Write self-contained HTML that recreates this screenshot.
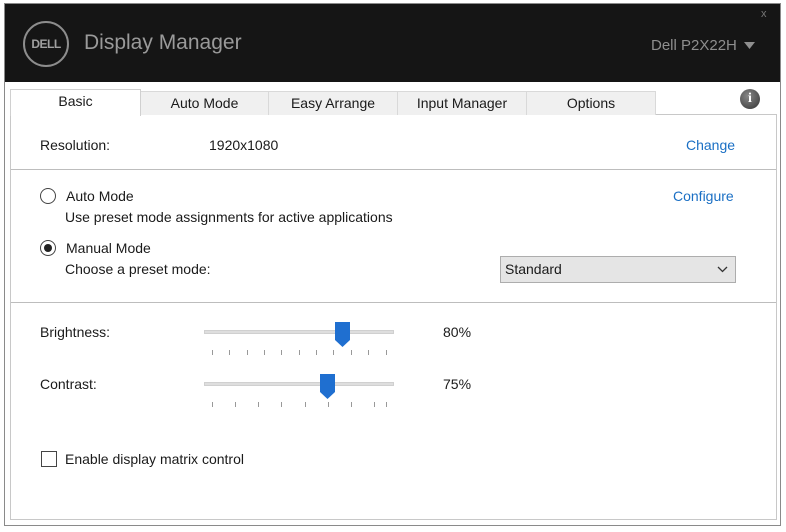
<!DOCTYPE html>
<html><head><style>
*{margin:0;padding:0;box-sizing:border-box}
body{width:786px;height:532px;background:#fff;font-family:"Liberation Sans",sans-serif;font-size:14px;color:#1a1a1a;position:relative;overflow:hidden}
.a{position:absolute;white-space:nowrap}
.tab{position:absolute;top:91px;height:24px;background:#f0f0f0;border:1px solid #d9d9d9;border-bottom:none;text-align:center;line-height:23px;font-size:14px}
.tick{position:absolute;width:1px;height:5px;background:#999}
.hl{position:absolute;left:11px;width:765px;height:1px;background:#bdbdbd}
.blue{color:#1a6fc4}
</style></head><body>
<div class="a" style="left:4px;top:3px;width:777px;height:523px;border:1px solid #8a8a8a"></div>
<div class="a" style="left:5px;top:4px;width:775px;height:78px;background:#151515"></div>
<div class="a" style="left:23px;top:21px;width:46px;height:46px;border:2px solid #8d8d8d;border-radius:50%;color:#a0a0a0;font-size:12px;font-weight:bold;text-align:center;line-height:42px;letter-spacing:-0.5px">DELL</div>
<div class="a" style="left:84px;top:31px;font-size:21px;color:#9a9a9a">Display Manager</div>
<div class="a" style="left:651px;top:37px;font-size:15px;color:#8e8e8e">Dell P2X22H</div>
<svg class="a" style="left:744px;top:42px" width="11" height="8"><path d="M0 0H11L5.5 7Z" fill="#8e8e8e"/></svg>
<div class="a" style="left:761px;top:8px;font-size:11px;color:#777">x</div>
<div class="a" style="left:10px;top:114px;width:767px;height:406px;border:1px solid #c8c8c8"></div>
<div class="tab" style="left:140px;width:129px">Auto Mode</div>
<div class="tab" style="left:268px;width:130px">Easy Arrange</div>
<div class="tab" style="left:397px;width:130px">Input Manager</div>
<div class="tab" style="left:526px;width:130px">Options</div>
<div class="tab" style="left:10px;top:89px;width:131px;height:27px;background:#fff;border-color:#d0d0d0">Basic</div>
<div class="a" style="left:740px;top:89px;width:20px;height:20px;border-radius:50%;background:radial-gradient(circle at 40% 35%,#888,#333);color:#fff;font-weight:bold;font-size:14px;text-align:center;line-height:20px;font-family:'Liberation Serif',serif">i</div>
<div class="a" style="left:40px;top:137px">Resolution:</div>
<div class="a" style="left:209px;top:137px">1920x1080</div>
<div class="a blue" style="left:686px;top:137px">Change</div>
<div class="hl" style="top:169px"></div>
<div class="a" style="left:40px;top:188px;width:16px;height:16px;border:1px solid #444;border-radius:50%"></div>
<div class="a" style="left:66px;top:188px">Auto Mode</div>
<div class="a blue" style="left:673px;top:188px">Configure</div>
<div class="a" style="left:65px;top:209px">Use preset mode assignments for active applications</div>
<div class="a" style="left:40px;top:240px;width:16px;height:16px;border:1px solid #444;border-radius:50%"></div>
<div class="a" style="left:44px;top:244px;width:8px;height:8px;background:#222;border-radius:50%"></div>
<div class="a" style="left:66px;top:240px">Manual Mode</div>
<div class="a" style="left:65px;top:261px">Choose a preset mode:</div>
<div class="a" style="left:500px;top:256px;width:236px;height:27px;background:#e5e5e5;border:1px solid #adadad"></div>
<div class="a" style="left:505px;top:261px">Standard</div>
<svg class="a" style="left:717px;top:266px" width="11" height="7"><path d="M1 1L5.5 5.5L10 1" fill="none" stroke="#333" stroke-width="1.3"/></svg>
<div class="hl" style="top:302px"></div>
<div class="a" style="left:40px;top:324px">Brightness:</div>
<div class="a" style="left:204px;top:330px;width:190px;height:4px;background:#dedede;border:1px solid #d0d0d0"></div>
<svg class="a" style="left:335px;top:322px" width="15" height="26"><path d="M0 0H15V18L7.5 25L0 18Z" fill="#1f6fd0"/></svg>
<div class="a" style="left:443px;top:324px">80%</div>
<div class="a" style="left:40px;top:376px">Contrast:</div>
<div class="a" style="left:204px;top:382px;width:190px;height:4px;background:#dedede;border:1px solid #d0d0d0"></div>
<svg class="a" style="left:320px;top:374px" width="15" height="26"><path d="M0 0H15V18L7.5 25L0 18Z" fill="#1f6fd0"/></svg>
<div class="a" style="left:443px;top:376px">75%</div>
<div class="tick" style="left:212px;top:350px"></div><div class="tick" style="left:229px;top:350px"></div><div class="tick" style="left:247px;top:350px"></div><div class="tick" style="left:264px;top:350px"></div><div class="tick" style="left:281px;top:350px"></div><div class="tick" style="left:299px;top:350px"></div><div class="tick" style="left:316px;top:350px"></div><div class="tick" style="left:333px;top:350px"></div><div class="tick" style="left:351px;top:350px"></div><div class="tick" style="left:368px;top:350px"></div><div class="tick" style="left:386px;top:350px"></div>
<div class="tick" style="left:212px;top:402px"></div><div class="tick" style="left:235px;top:402px"></div><div class="tick" style="left:258px;top:402px"></div><div class="tick" style="left:281px;top:402px"></div><div class="tick" style="left:305px;top:402px"></div><div class="tick" style="left:328px;top:402px"></div><div class="tick" style="left:351px;top:402px"></div><div class="tick" style="left:374px;top:402px"></div><div class="tick" style="left:386px;top:402px"></div>
<div class="a" style="left:41px;top:451px;width:16px;height:16px;border:1px solid #444"></div>
<div class="a" style="left:65px;top:451px">Enable display matrix control</div>
</body></html>
